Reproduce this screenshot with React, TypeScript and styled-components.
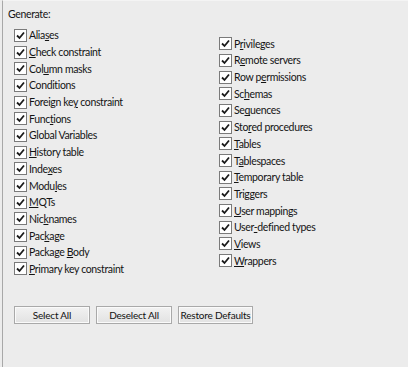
import React from 'react'
import styled, {createGlobalStyle} from 'styled-components'

const GlobalStyle = createGlobalStyle`
  html, body {
    margin: 0;
    padding: 0;
    background: #ececec;
  }
`

const Panel = styled.div`
  box-sizing: border-box;
  width: 408px;
  height: 367px;
  margin-left: 2px;
  border-left: 1px solid #a8a8a8;
  border-top: 1px solid #f4f4f4;
  background: #ececec;
  font-family: Lato, 'Open Sans', sans-serif;
  font-size: 10.5px;
  letter-spacing: -0.35px;
  color: #141414;
  padding: 4px 0 0 5px;
  display: flex;
  flex-direction: column;
`

const Heading = styled.div`
  height: 18px;
  line-height: 18px;
`

const Columns = styled.div`
  display: grid;
  grid-template-columns: 205px 1fr;
  align-items: center;
  padding: 4px 0 0 6px;
`

const Column = styled.div`
  display: flex;
  flex-direction: column;
`

const Row = styled.label`
  display: flex;
  align-items: center;
  gap: 2px;
  height: 16.7px;
  white-space: nowrap;
`

const Box = styled.span`
  box-sizing: border-box;
  width: 13px;
  height: 13px;
  border: 1px solid #7a7a7a;
  background: #ffffff;
  display: flex;
  align-items: center;
  justify-content: center;
  flex: none;
`

const Key = styled.span`
  text-decoration: underline;
`

const Buttons = styled.div`
  display: flex;
  gap: 6px;
  margin: 29px 0 0 6px;
`

const Button = styled.button<{$w: number}>`
  box-sizing: border-box;
  width: ${(p) => p.$w}px;
  height: 18px;
  padding: 0;
  border: 1px solid #a9a9a9;
  background: linear-gradient(#f2f2f2, #e2e2e2);
  font-family: Lato, 'Open Sans', sans-serif;
  font-size: 10px;
  letter-spacing: -0.2px;
  white-space: nowrap;
  color: #111;
  box-shadow: inset 0 0 0 1px #fafafa;
`

type Item = [string, number]

// label text and the index of the mnemonic letter (-1 = none)
const left: Item[] = [
  ['Aliases', 4],
  ['Check constraint', 0],
  ['Column masks', 3],
  ['Conditions', -1],
  ['Foreign key constraint', 10],
  ['Functions', 4],
  ['Global Variables', -1],
  ['History table', 0],
  ['Indexes', 4],
  ['Modules', 4],
  ['MQTs', 0],
  ['Nicknames', 3],
  ['Package', 3],
  ['Package Body', 8],
  ['Primary key constraint', 0],
]

const right: Item[] = [
  ['Privileges', 1],
  ['Remote servers', 1],
  ['Row permissions', 5],
  ['Schemas', 2],
  ['Sequences', 2],
  ['Stored procedures', 3],
  ['Tables', 0],
  ['Tablespaces', 1],
  ['Temporary table', 0],
  ['Triggers', -1],
  ['User mappings', 0],
  ['User-defined types', 4],
  ['Views', 0],
  ['Wrappers', 0],
]

const Check = () => (
  <Box>
    <svg width="9" height="9" viewBox="0 0 9 9">
      <path d="M1 4.5 L3.5 7 L8 1.5" fill="none" stroke="#1a1a1a" strokeWidth="1.8" />
    </svg>
  </Box>
)

const Label = ({text, at}: {text: string; at: number}) =>
  at < 0 ? (
    <span>{text}</span>
  ) : (
    <span>
      {text.slice(0, at)}
      <Key>{text[at]}</Key>
      {text.slice(at + 1)}
    </span>
  )

const List = ({items}: {items: Item[]}) => (
  <Column>
    {items.map(([text, at]) => (
      <Row key={text}>
        <Check />
        <Label text={text} at={at} />
      </Row>
    ))}
  </Column>
)

export default function App() {
  return (
    <>
      <GlobalStyle />
      <Panel>
        <Heading>Generate:</Heading>
        <Columns>
          <List items={left} />
          <List items={right} />
        </Columns>
        <Buttons>
          <Button $w={76}>Select All</Button>
          <Button $w={76}>Deselect All</Button>
          <Button $w={75}>Restore Defaults</Button>
        </Buttons>
      </Panel>
    </>
  )
}
